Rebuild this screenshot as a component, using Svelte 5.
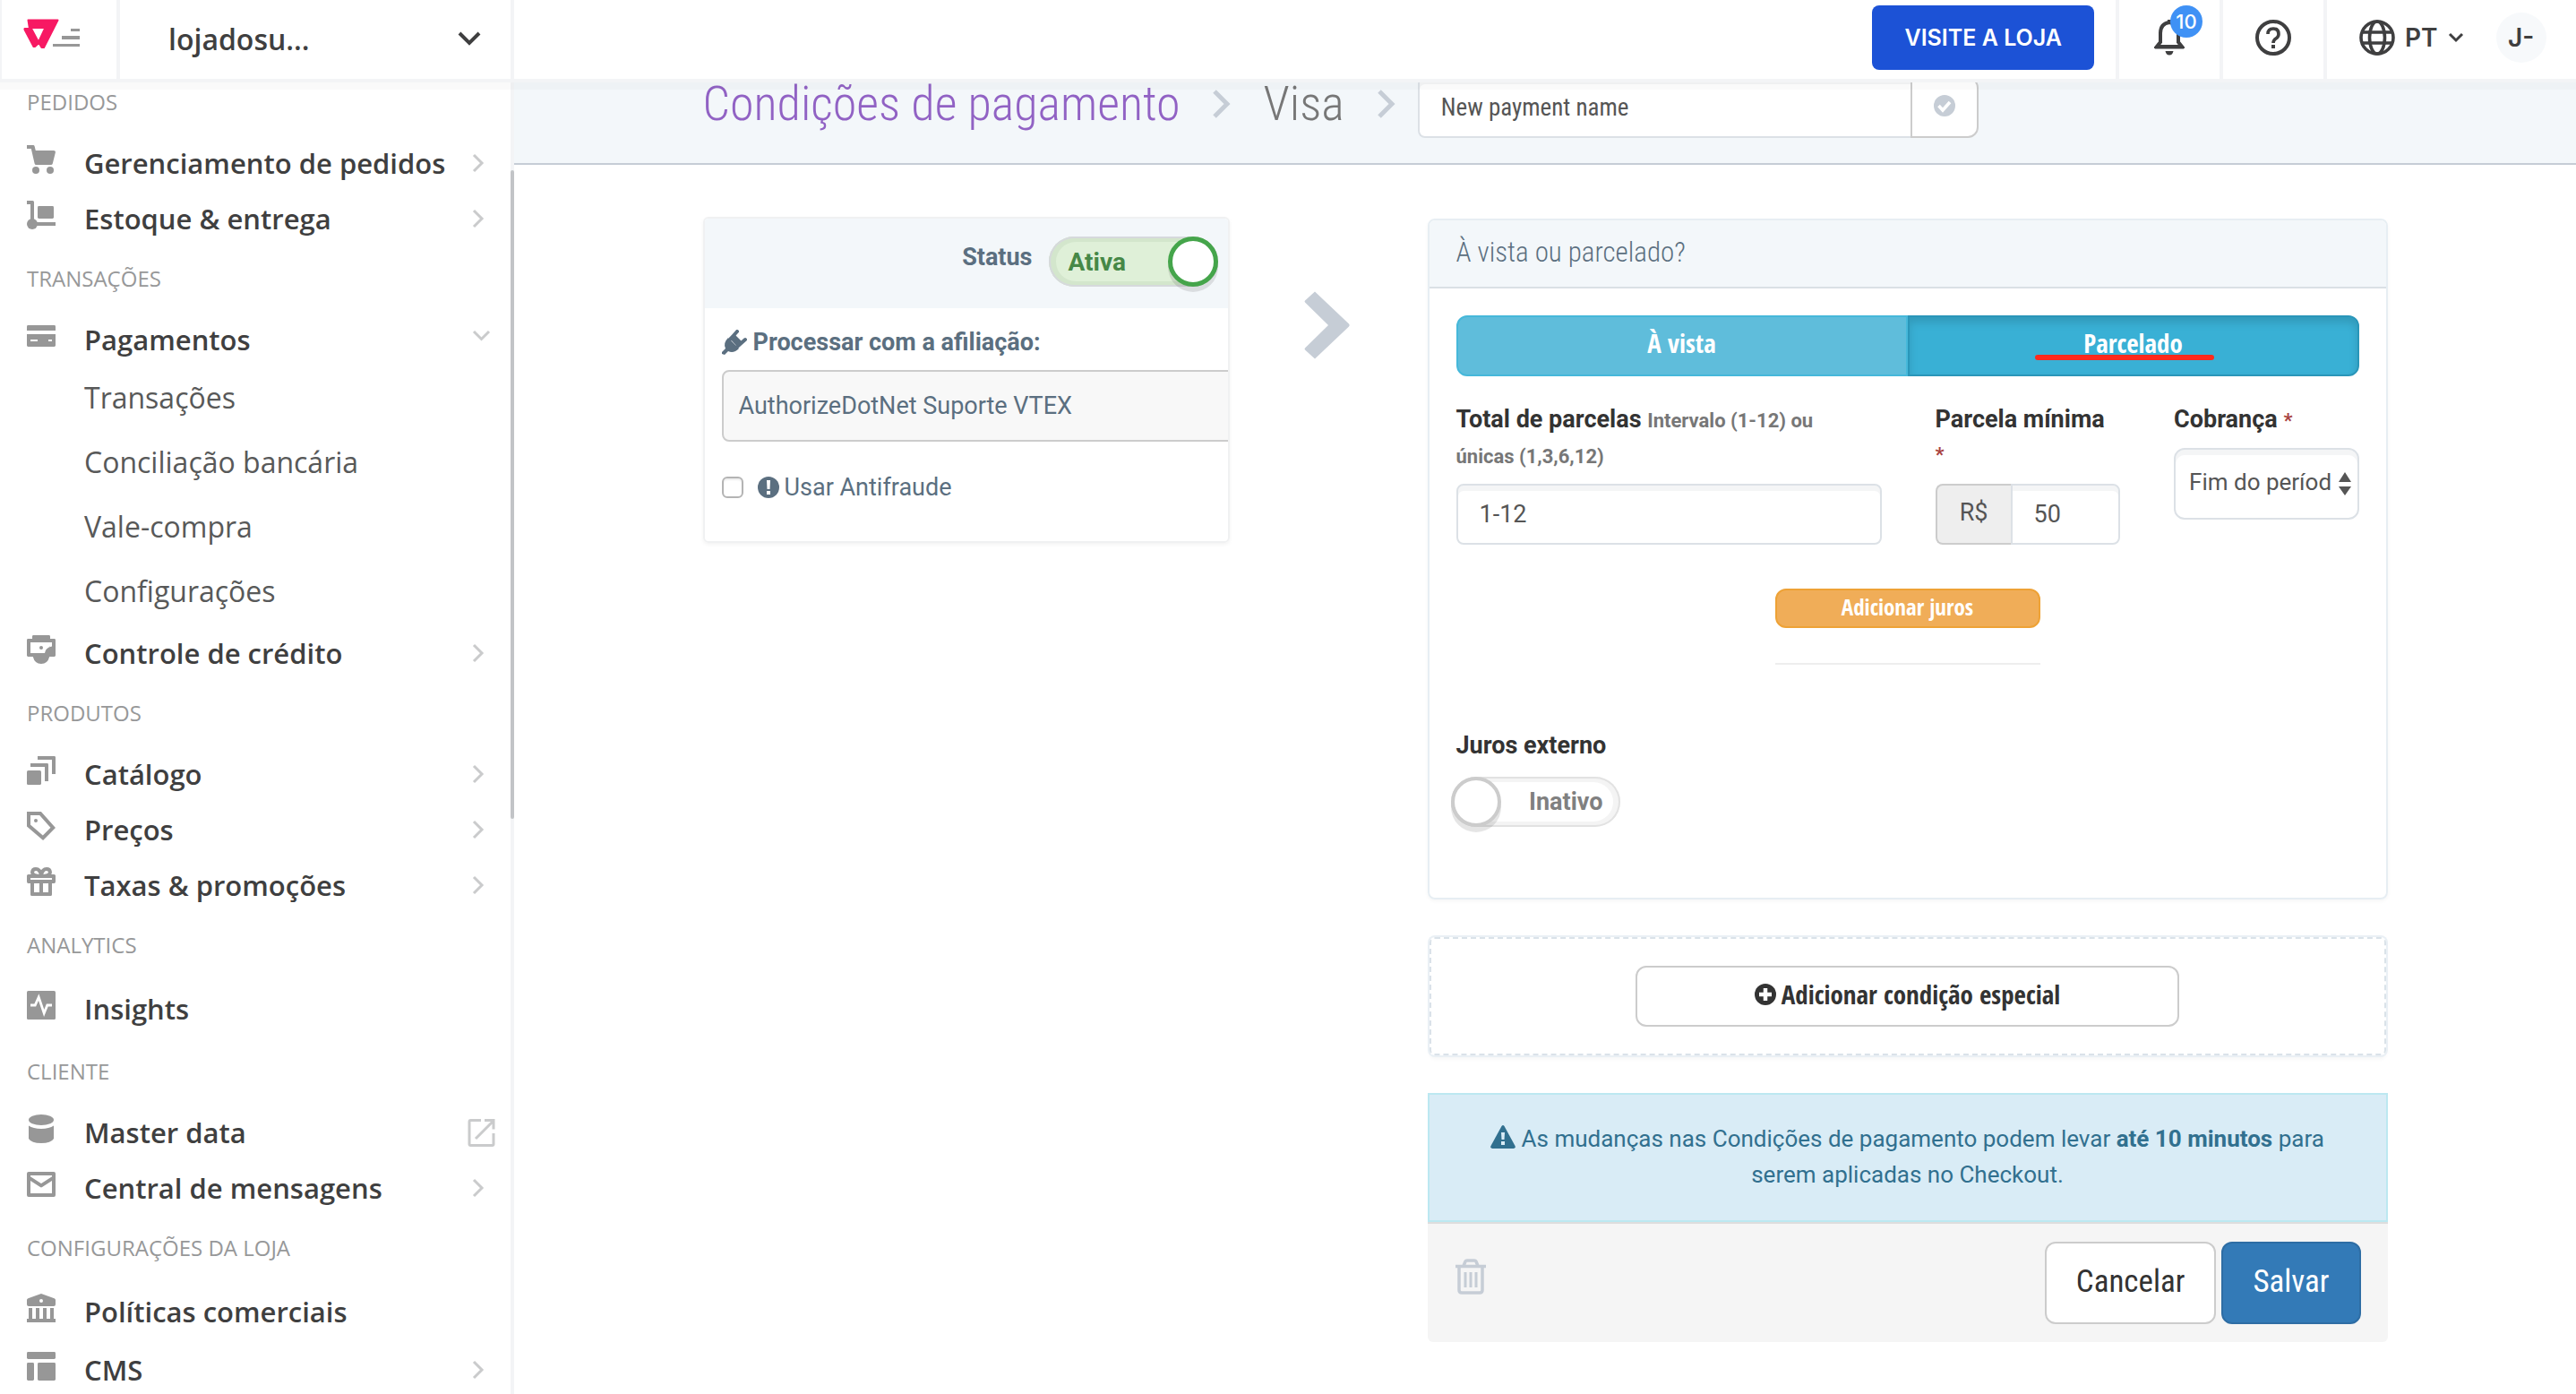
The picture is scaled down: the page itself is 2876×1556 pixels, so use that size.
<script>
  const icons = {
    cart: '<path d="M0 0h3.6q.5 0 .7.6L4.9 3H15q1.2 0 .9 1.2l-1.5 6q-.2.8-1 .8H5.2q-.7 0-.9-.8L2.4 2H0z"/><circle cx="5" cy="14" r="2"/><circle cx="13" cy="14" r="2"/>',
    dolly: '<path d="M0 0h3.2q.8 0 .8.8V12h12v2H3v-3h-1V2H0z"/><circle cx="3" cy="13" r="3"/><rect x="6" y="3" width="9" height="7" rx=".7"/>',
    card: '<path d="M.7 2h14.6q.7 0 .7.7V5H0V2.7Q0 2 .7 2z"/><path fill-rule="evenodd" d="M0 7h16v6.3q0 .7-.7.7H.7q-.7 0-.7-.7zM2 10v1h4v-1zM12 10v1h2v-1z"/>',
    credit: '<path fill-rule="evenodd" d="M3.7 0h8.6q.7 0 .7.7V2h2.3q.7 0 .7.7v8.6q0 .7-.7.7H12.6Q11.6 16 8 16T3.4 12H.7Q0 12 0 11.300V2.700Q0 2 .7 2H3V.7Q3 0 3.700 0zM2 4v6h8q.2-3 4-3.800V4z"/><circle cx="8" cy="7" r="1"/><path d="M12.600 6v4.500h-.1V6z"/>',
    catalog: '<rect y="8" width="8" height="8" rx=".8"/><path d="M2 4h9.300q.7 0 .7.7V14h-2V6H2z"/><path d="M6 0h9.300q.7 0 .7.7V10h-2V2H6z"/>',
    tag: '<path d="M1 1h6.500l7.100 8L9 14.600 1 7.800z" fill="none" stroke="currentColor" stroke-width="2"/><circle cx="5" cy="5" r="1"/>',
    gift: '<path d="M7.600 5Q3 5 3 2.800 3.200 1 5 1q2.400 0 3 3.600Q8.600 1 11 1q1.800 0 2 1.800Q13 5 8.400 5" fill="none" stroke="currentColor" stroke-width="2"/><path fill-rule="evenodd" d="M.8 4h14.400q.8 0 .8.8V8q0 1-.8 1H14v6.200q0 .8-.8.8H2.800q-.8 0-.8-.8V9H.8Q0 9 0 8V4.800Q0 4 .8 4zM2 6v1h12V6zM4 9v5h3V9zM9 9v5h3V9z"/>',
    pulse: '<rect width="16" height="16" rx=".8"/><path d="M2 8h2.600l2-4.500 3 9L11.400 8H14" fill="none" stroke="#fff" stroke-width="1.400"/>',
    database: '<ellipse cx="8" cy="3" rx="7" ry="3"/><path d="M1 6.300q2.500 1.700 7 1.700t7-1.700V13.500q-1.500 2.500-7 2.500t-7-2.500z"/>',
    mail: '<path d="M1 2h14v12H1zM1 4.200l7 4.500 7-4.500" fill="none" stroke="currentColor" stroke-width="2" stroke-linejoin="round"/>',
    bank: '<path fill-rule="evenodd" d="M8 0l7.300 2.600q.7.300.7 1V6q0 1-1 1H1Q0 7 0 6V3.600q0-.7.7-1zM8 3a1 1 0 1 0 0 2 1 1 0 0 0 0-2z"/><path d="M1 8h2v6h2V8h2v6h2V8h2v6h2V8h2v6h1v2H0v-2h1z"/>',
    layout: '<rect width="16" height="4" rx=".7"/><rect y="6" width="4" height="10" rx=".7"/><rect x="6" y="6" width="10" height="10" rx=".7"/>'
  };

  const groups = [
    { title: 'PEDIDOS', items: [
      { label: 'Gerenciamento de pedidos', icon: 'cart', end: 'right' },
      { label: 'Estoque & entrega', icon: 'dolly', end: 'right' } ] },
    { title: 'TRANSAÇÕES', items: [
      { label: 'Pagamentos', icon: 'card', end: 'down', children: ['Transações', 'Conciliação bancária', 'Vale-compra', 'Configurações'] },
      { label: 'Controle de crédito', icon: 'credit', end: 'right' } ] },
    { title: 'PRODUTOS', items: [
      { label: 'Catálogo', icon: 'catalog', end: 'right' },
      { label: 'Preços', icon: 'tag', end: 'right' },
      { label: 'Taxas & promoções', icon: 'gift', end: 'right' } ] },
    { title: 'ANALYTICS', items: [{ label: 'Insights', icon: 'pulse' }] },
    { title: 'CLIENTE', items: [
      { label: 'Master data', icon: 'database', end: 'external' },
      { label: 'Central de mensagens', icon: 'mail', end: 'right' } ] },
    { title: 'CONFIGURAÇÕES DA LOJA', items: [
      { label: 'Políticas comerciais', icon: 'bank' },
      { label: 'CMS', icon: 'layout', end: 'right' } ] }
  ];

  let active = $state(true);
  let external = $state(false);
  let mode = $state('parcelado');
  let antifraud = $state(false);
  let paymentName = $state('New payment name');
  let installments = $state('1-12');
  let minimum = $state('50');
</script>

<div class="app">
  <header class="topbar">
    <div class="brand">
      <button class="plain logo" aria-label="Menu">
        <svg width="64" height="34" viewBox="0 0 64 34">
          <path fill="#f71963" stroke="#f71963" stroke-width="2" stroke-linejoin="round" fill-rule="evenodd" d="M5.500 1.500H38.500L23 32h-2.500L17.500 27 13 31h-1.500L1.500 12V11H7zM8.500 10L17 26 24.500 10z"/>
          <path fill="#979797" d="M53 11h10v3H53zM43 19h20v4H43zM33 28h30v3H33z"/>
        </svg>
      </button>
      <button class="plain store">
        <span>lojadosu...</span>
        <svg width="26" height="18" viewBox="0 0 26 18"><path d="M2 3l11 11L24 3" fill="none" stroke="#3f3f40" stroke-width="4"/></svg>
      </button>
    </div>
    <div class="actions">
      <a class="visit" href="#loja">VISITE A LOJA</a>
      <button class="plain cell" aria-label="Notificações">
        <span class="bell">
          <svg width="34" height="40" viewBox="0 0 34 40"><path d="M17 3c-7 1-10 5-10 12v10l-4 5h28l-4-5V15c0-7-3-11-10-12z" fill="none" stroke="#3f3f40" stroke-width="4"/><path fill="#3f3f40" d="M1 29h32v3.500H1zM12.500 35h9q-1 4.500-4.500 4.500t-4.500-4.500zM15 0h4v4h-4z"/></svg>
          <span class="badge">10</span>
        </span>
      </button>
      <button class="plain cell" aria-label="Ajuda">
        <svg width="40" height="40" viewBox="0 0 40 40" fill="none" stroke="#3f3f40" stroke-width="4"><circle cx="20" cy="20" r="18"/><path d="M14 16q0-6 6-6t6 6q0 3-3 5t-3 5" stroke-width="3.600"/><path d="M20 28v4"/></svg>
      </button>
      <div class="cell account">
        <button class="plain lang">
          <svg width="40" height="40" viewBox="0 0 40 40" fill="none" stroke="#3f3f40" stroke-width="3.600"><circle cx="20" cy="20" r="18"/><ellipse cx="20" cy="20" rx="8.500" ry="18"/><path d="M4 14h32M4 26h32"/></svg>
          <span>PT</span>
          <svg width="18" height="12" viewBox="0 0 18 12"><path d="M2 2l7 7 7-7" fill="none" stroke="#3f3f40" stroke-width="3"/></svg>
        </button>
        <button class="plain avatar">J-</button>
      </div>
    </div>
  </header>

  <div class="body">
    <aside>
      <nav>
        {#each groups as group}
          <h2>{group.title}</h2>
          <ul>
            {#each group.items as item}
              <li>
                <a class="item" class:tall={!item.end} href="#menu">
                  <svg class="icon" width="32" height="32" viewBox="0 0 16 16" fill="currentColor">{@html icons[item.icon]}</svg>
                  <span>{item.label}</span>
                  {#if item.end === 'right'}
                    <svg class="end" width="34" height="22" viewBox="0 0 34 22"><path d="M8 2l9 9-9 9" /></svg>
                  {:else if item.end === 'down'}
                    <svg class="end" width="34" height="22" viewBox="0 0 34 22"><path d="M8 2l8.500 8.500L25 2" /></svg>
                  {:else if item.end === 'external'}
                    <svg class="end" width="34" height="32" viewBox="0 0 34 32"><path d="M16 2.500H4.500q-1.500 0-1.500 1.500v25q0 1.500 1.500 1.500h24q1.500 0 1.500-1.500V17M20 2.500h10v10M30 3L10 23" /></svg>
                  {/if}
                </a>
                {#if item.children}
                  <ul>
                    {#each item.children as child}<li><a class="sub" href="#submenu">{child}</a></li>{/each}
                  </ul>
                {/if}
              </li>
            {/each}
          </ul>
        {/each}
      </nav>
      <div class="track"><div class="thumb"></div></div>
    </aside>

    <main>
      <div class="crumbs">
        <div class="container crumb-row">
          <a class="root" href="#condicoes">Condições de pagamento</a>
          <svg width="20" height="40" viewBox="0 0 20 40"><path d="M2 2l14 14L2 30" fill="none" stroke="#c6cdd6" stroke-width="5"/></svg>
          <span class="current">Visa</span>
          <svg width="20" height="40" viewBox="0 0 20 40"><path d="M2 2l14 14L2 30" fill="none" stroke="#c6cdd6" stroke-width="5"/></svg>
          <form class="rename">
            <input class="field" aria-label="Nome do pagamento" bind:value={paymentName} />
            <button type="button" aria-label="Confirmar">
              <svg width="24" height="24" viewBox="0 0 24 24"><circle cx="12" cy="12" r="12" fill="#c6cdd6"/><path d="M5.500 12l4.500 5 8-9" fill="none" stroke="#fff" stroke-width="3.600"/></svg>
            </button>
          </form>
        </div>
      </div>

      <div class="container columns">
        <section class="panel">
          <div class="panel-head">
            <span class="status">Status</span>
            <label class="toggle on">
              <input type="checkbox" role="switch" aria-label="Ativa" bind:checked={active} />
              <span>Ativa</span><i></i>
            </label>
          </div>
          <div class="panel-body">
            <label class="affil" for="affiliation">
              <svg width="28" height="28" viewBox="0 0 28 28" fill="currentColor"><path d="M7 9L19 21q-6 6-12 3l-4 4-3-1 0-2 4-4Q1 15 7 9z"/><path d="M9 11l8-9M17 19l9-8" stroke="currentColor" stroke-width="4" stroke-linecap="round"/><path d="M8 9q4-4 7-3l7 7q0 4-4 7z"/></svg>
              Processar com a afiliação:
            </label>
            <select id="affiliation" class="affil-select"><option>AuthorizeDotNet Suporte VTEX</option></select>
            <label class="check">
              <input type="checkbox" bind:checked={antifraud} />
              <svg width="24" height="24" viewBox="0 0 24 24"><circle cx="12" cy="12" r="12" fill="#5b6f80"/><path d="M10 4h4l-.5 10h-3zM10 16h4v4h-4z" fill="#fff"/></svg>
              <span>Usar Antifraude</span>
            </label>
          </div>
        </section>

        <div class="arrow">
          <svg width="52" height="78" viewBox="0 0 52 78"><path d="M12 1.500L50 37.500q1.500 1.500 0 3L12 76.500 1 66.500q-1-1 0-2L27 39 1 13.500q-1-1 0-2z" fill="#c6cdd6"/></svg>
        </div>

        <div class="right">
          <section class="card">
            <h3>À vista ou parcelado?</h3>
            <div class="card-body">
              <div class="tabs">
                <button class:active={mode === 'vista'} onclick={() => (mode = 'vista')}>À vista</button>
                <button class:active={mode === 'parcelado'} onclick={() => (mode = 'parcelado')}>Parcelado<span class="mark"></span></button>
              </div>
              <div class="fields">
                <div>
                  <label class="total" for="total">Total de parcelas <small>Intervalo (1-12) ou únicas (1,3,6,12)</small></label>
                  <input id="total" class="field" bind:value={installments} />
                </div>
                <div>
                  <label for="minimum">Parcela mínima <em class="below">*</em></label>
                  <div class="money"><span>R$</span><input id="minimum" class="field" bind:value={minimum} /></div>
                </div>
                <div>
                  <label for="billing">Cobrança <em>*</em></label>
                  <div class="billing">
                    <select id="billing" class="field"><option>Fim do período</option></select>
                    <svg width="14" height="26" viewBox="0 0 14 26" fill="#555"><path d="M7 0l7 11H0zM7 26l7-10H0z"/></svg>
                  </div>
                </div>
              </div>
              <div class="interest">
                <button class="btn warn">Adicionar juros</button>
                <hr />
              </div>
              <label class="ext" for="external">Juros externo</label>
              <label class="toggle off">
                <input id="external" type="checkbox" role="switch" bind:checked={external} />
                <i></i><span>Inativo</span>
              </label>
            </div>
          </section>

          <section class="dashed">
            <button class="btn special">
              <svg width="24" height="24" viewBox="0 0 24 24"><circle cx="12" cy="12" r="12" fill="#333"/><path d="M12 5v14M5 12h14" stroke="#fff" stroke-width="4.500"/></svg>
              Adicionar condição especial
            </button>
          </section>

          <section class="finish">
            <p class="alert">
              <svg width="28" height="26" viewBox="0 0 28 26"><path d="M12.500 1q1.500-2 3 0L27.500 23q1 2.500-1.500 3H2q-2.500-.5-1.500-3z" fill="#31708f"/><path d="M12 8h4l-.5 8h-3zM12 18h4v4h-4z" fill="#d9ecf6"/></svg>
              As mudanças nas Condições de pagamento podem levar <b>até 10 minutos</b> para serem aplicadas no Checkout.
            </p>
            <footer>
              <button class="plain trash" aria-label="Excluir">
                <svg width="36" height="40" viewBox="0 0 36 40" fill="none" stroke="#c6cdd6" stroke-width="3.500"><path d="M1 8.500h34M10 8l2-5q.5-1 2-1h8q1.500 0 2 1l2 5M5 9v26q0 3 3 3h20q3 0 3-3V9"/><path d="M12 15v17M18 15v17M24 15v17" stroke-width="3"/></svg>
              </button>
              <button class="btn big">Cancelar</button>
              <button class="btn big primary">Salvar</button>
            </footer>
          </section>
        </div>
      </div>
    </main>
  </div>
</div>

<style>
  :global(body) { background: #fff; }
  * { box-sizing: border-box; }
  .app { height: 100vh; display: flex; flex-direction: column; overflow: hidden; font-family: Roboto, "Liberation Sans", sans-serif; font-size: 27px; color: #333; }
  button, input, select { font: inherit; color: inherit; margin: 0; }
  button { cursor: pointer; }
  svg { flex: none; display: block; }
  a { text-decoration: none; color: inherit; }
  ul { list-style: none; margin: 0; padding: 0; }
  .plain { border: 0; background: none; padding: 0; }

  .topbar { flex: none; height: 92px; border-bottom: 4px solid #f3f4f6; display: flex; justify-content: space-between; background: #fff; color: #3f3f40; position: relative; z-index: 2; box-shadow: 0 8px 0 rgba(0, 0, 0, 0.02); }
  .brand { width: 574px; display: flex; border-left: 2px solid #f3f4f6; border-right: 4px solid #f3f4f6; }
  .logo { width: 132px; border-right: 4px solid #f3f4f6; padding: 0 0 12px 24px; display: flex; align-items: center; }
  .store { flex: 1; display: flex; align-items: center; justify-content: space-between; padding: 0 33px 2px 54px; font: 600 32px "Open Sans", sans-serif; }
  .actions { display: flex; }
  .visit { align-self: flex-start; margin: 6px 24px 0 0; padding: 0 36px; line-height: 72px; border-radius: 8px; background: #1c52d6; color: #fff; font-family: Inter, sans-serif; font-weight: 600; font-size: 25px; }
  .cell { width: 116px; border-left: 4px solid #f3f4f6; display: flex; align-items: center; justify-content: center; padding-bottom: 4px; }
  .account { width: 282px; justify-content: flex-start; padding-left: 36px; gap: 36px; }
  .bell { position: relative; display: block; }
  .badge { position: absolute; left: 18px; top: -16px; width: 36px; height: 36px; border-radius: 50%; background: #3f91f5; color: #fff; font: 500 22px/36px Inter, sans-serif; text-align: center; }
  .lang { display: flex; align-items: center; gap: 11px; font: 600 28px Inter, sans-serif; }
  .avatar { width: 56px; height: 56px; border-radius: 50%; background: #f7f9fb; font: 600 28px Inter, sans-serif; }

  .body { flex: 1; min-height: 0; display: flex; }
  aside { flex: none; width: 574px; display: flex; overflow: hidden; font-family: "Open Sans", sans-serif; }
  nav { flex: 1; margin-top: -14px; }
  h2 { margin: 0; padding: 19px 30px 21px; font-size: 24px; line-height: 33px; font-weight: 500; color: #979899; }
  .item { display: flex; align-items: center; height: 62px; padding: 0 15px 0 30px; font-size: 31px; font-weight: 600; color: #3f3f40; }
  .item.tall { height: 68px; }
  .item span { flex: 1; padding-left: 32px; }
  .icon { margin-bottom: 8px; color: #979797; }
  .end { fill: none; stroke: #cacbcc; stroke-width: 3; }
  .sub { display: flex; align-items: center; height: 72px; padding: 0 0 5px 94px; font-size: 32px; color: #585959; }
  .track { width: 4px; background: #f3f4f6; padding-top: 98px; }
  .thumb { height: 53%; border-radius: 2px; background: #c2c4c7; }

  main { flex: 1; min-width: 0; overflow: hidden; }
  .container { width: calc(100% - 80px); max-width: 1881px; margin: 0 auto; }
  .crumbs { height: 92px; overflow: hidden; background: #f3f7fa; border-bottom: 2px solid #c6cdd6; display: flex; align-items: flex-end; padding-bottom: 28px; }
  .crumb-row { display: flex; align-items: center; font-family: "Roboto Condensed", "Open Sans", sans-serif; font-weight: 300; font-size: 54px; line-height: 60px; color: #777; }
  .root { color: #9162c4; margin-right: 36px; padding-bottom: 8px; }
  .current { margin: 0 37px; padding-bottom: 8px; }
  .rename { flex: 0 1 626px; margin-left: 25px; display: flex; font-size: 27px; line-height: 40px; font-weight: 400; color: #555; }
  .rename input { flex: 1; min-width: 0; border-radius: 8px 0 0 8px; border-right: 0; }
  .rename button { width: 76px; border: 2px solid #ccc; border-radius: 0 12px 12px 0; background: #fff; display: flex; align-items: center; justify-content: center; padding: 0 0 4px; }
  .field { height: 68px; padding: 0 24px; border: 2px solid #dce1e6; border-radius: 8px; background: #fff; box-shadow: inset 0 6px 0 #f4f5f6; color: #555; }

  .columns { display: grid; grid-template-columns: 588fr 221fr 1072fr; padding-top: 58px; }
  .panel { align-self: start; border: 2px solid #f0f1f2; border-radius: 6px; box-shadow: 0 2px 4px rgba(0, 0, 0, 0.05); overflow: hidden; color: #5b6f80; }
  .panel-head { display: flex; justify-content: flex-end; align-items: flex-start; gap: 18px; height: 100px; padding: 20px 11px; background: #f3f7fa; }
  .status { font-weight: 700; line-height: 46px; }
  .panel-body { padding: 19px 0 41px 19px; }
  .affil { display: flex; align-items: center; gap: 7px; font-weight: 700; line-height: 38px; }
  .affil-select { appearance: none; display: block; width: 110%; height: 80px; margin-top: 12px; padding: 0 17px; border: 2px solid #ccc; border-radius: 8px; background: #f8f8f8; }
  .check { display: flex; align-items: center; margin-top: 32px; line-height: 38px; }
  .check input { appearance: none; width: 24px; height: 24px; margin-right: 16px; border: 2px solid #b4b4b4; border-radius: 6px; background: #fff; box-shadow: inset 0 2px 2px #eee; }
  .check span { padding-left: 6px; }

  .toggle { position: relative; display: flex; align-items: center; width: 189px; height: 56px; border-radius: 28px; font-weight: 700; font-size: 28px; }
  .toggle input { position: absolute; inset: 0; width: 100%; height: 100%; margin: 0; opacity: 0; }
  .toggle i { width: 56px; height: 56px; border-radius: 50%; background: #fff; }
  .toggle.on { justify-content: space-between; background: #dff0d8; box-shadow: inset 0 0 0 2px #d6d9dc, inset 2px 0 0 6px #d3e6cc; color: #468847; padding-left: 22px; }
  .toggle.on i { border: 5px solid #45a54b; box-shadow: 0 6px 0 rgba(0, 0, 0, 0.1); }
  .toggle.off { justify-content: space-between; margin: 15px 0 0 -6px; background: #fff; box-shadow: inset 0 0 0 2px #e2e2e2, inset -2px 0 0 6px #f4f4f4; color: #808080; padding-right: 19px; font-size: 27px; }
  .toggle.off i { border: 4px solid #ccc; box-shadow: 0 6px 0 rgba(0, 0, 0, 0.1); }

  .arrow { display: flex; justify-content: center; padding: 82px 2px 0 0; }

  .right { padding-top: 2px; display: flex; flex-direction: column; gap: 40px; min-width: 0; }
  .card { border: 2px solid #e7eef3; border-radius: 8px; box-shadow: 0 2px 4px rgba(0, 0, 0, 0.04); }
  h3 { margin: 0; padding: 15px 30px 17px; border-bottom: 2px solid #dae0e5; background: #f3f7fa; border-radius: 6px 6px 0 0; font: 300 31px/42px "Roboto Condensed", "Open Sans", sans-serif; color: #5b6f80; }
  .card-body { padding: 30px 30px 79px; }
  .tabs { display: flex; }
  .tabs button { position: relative; flex: 1; height: 68px; padding: 0 0 8px; border: 2px solid #46b8da; border-radius: 12px 0 0 12px; background: #5fbddb; color: #fff; font: 700 29px "Open Sans Condensed", "Open Sans", sans-serif; }
  .tabs button + button { border-radius: 0 12px 12px 0; }
  .tabs button.active { border-color: #2a96b9; background: #39b0d5; box-shadow: inset 0 6px 10px rgba(0, 0, 0, 0.13); }
  .mark { position: absolute; left: 28%; width: 40%; top: 42px; height: 6px; border-radius: 3px; background: #ff2a1c; }
  .fields { display: grid; grid-template-columns: 474fr 206fr 206fr; gap: 60px; margin-top: 28px; }
  .fields label, .ext { display: block; font-weight: 700; line-height: 40px; }
  .fields .total { padding-right: 48px; }
  .fields input, .billing { margin-top: 12px; }
  .fields input { width: 100%; display: block; }
  small { font-size: 22px; line-height: 30px; color: #777; }
  em { font-style: normal; font-weight: 700; font-size: 22px; line-height: 30px; color: #a94442; }
  .below { display: block; line-height: 40px; }
  .money { display: flex; margin-top: 12px; }
  .money span { flex: none; width: 84px; border: 2px solid #ccc; border-right: 0; border-radius: 8px 0 0 8px; background: #eee; text-align: center; line-height: 60px; color: #555; }
  .money input { min-width: 0; margin: 0; border-radius: 0 8px 8px 0; }
  .billing { position: relative; }
  .billing select { appearance: none; display: block; width: 100%; height: 80px; padding: 0 29px 4px 15px; border-radius: 12px; font-size: 26px; text-overflow: clip; }
  .billing svg { position: absolute; right: 9px; top: 27px; pointer-events: none; }
  .interest { width: 296px; margin: 49px auto 70px; }
  .btn { display: flex; align-items: center; justify-content: center; gap: 6px; padding: 0 0 5px; border: 2px solid #ccc; border-radius: 12px; background: #fff; font-family: "Open Sans Condensed", "Open Sans", sans-serif; font-weight: 700; font-size: 29px; color: #333; }
  .warn { width: 100%; height: 44px; border-color: #eea236; background: #f0ad58; color: #fff; font-size: 25px; }
  hr { margin: 39px 0 0; border: 0; border-top: 2px solid #eee; }
  .dashed { margin: 2px; padding: 30px 0; border: 2px dashed #dae2e9; border-radius: 6px; box-shadow: 0 0 0 2px #eaf0f5, 0 4px 4px rgba(0, 0, 0, 0.04); display: flex; justify-content: center; }
  .special { width: 57%; height: 68px; }
  .alert { margin: 0; padding: 29px 40px 31px; border: 2px solid #bce8f1; background: #d9ecf6; color: #31708f; font-size: 26px; line-height: 40px; text-align: center; }
  .alert svg { display: inline-block; vertical-align: -2px; }
  footer { display: flex; align-items: center; gap: 6px; padding: 20px 30px; border-top: 2px solid #ddd; border-radius: 0 0 6px 6px; background: #f5f5f5; }
  .trash { margin: 0 auto 14px 0; }
  .big { height: 92px; padding: 0 33px 4px; font-family: "Roboto Condensed", "Open Sans", sans-serif; font-weight: 400; font-size: 35px; }
  .primary { border-color: #2e6da4; background: #337ab7; color: #fff; }
</style>
